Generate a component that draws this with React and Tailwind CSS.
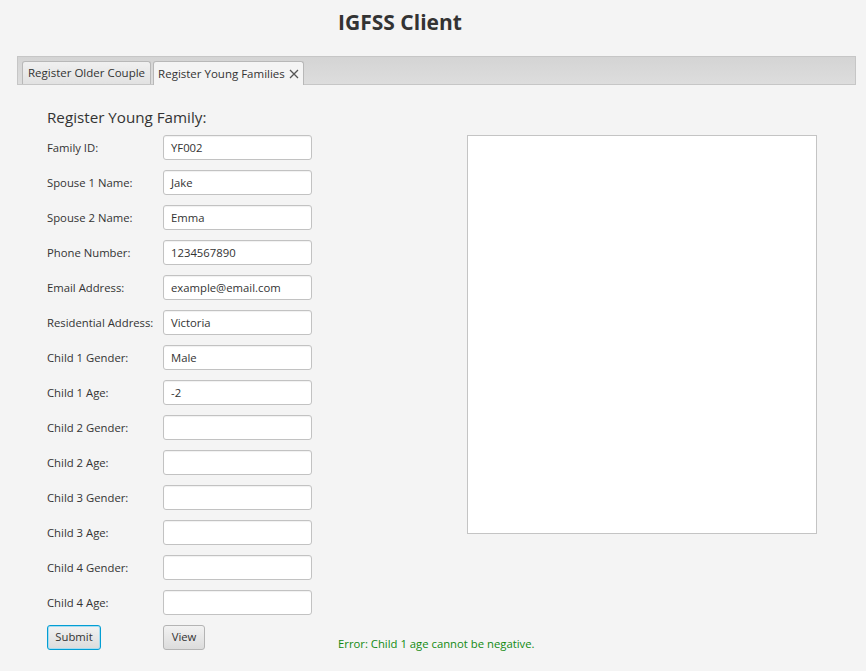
import React from "react";

const rows = [
  ["Family ID:", "YF002"],
  ["Spouse 1 Name:", "Jake"],
  ["Spouse 2 Name:", "Emma"],
  ["Phone Number:", "1234567890"],
  ["Email Address:", "example@email.com"],
  ["Residential Address:", "Victoria"],
  ["Child 1 Gender:", "Male"],
  ["Child 1 Age:", "-2"],
  ["Child 2 Gender:", ""],
  ["Child 2 Age:", ""],
  ["Child 3 Gender:", ""],
  ["Child 3 Age:", ""],
  ["Child 4 Gender:", ""],
  ["Child 4 Age:", ""],
];

const Field = ({ label, value }) => (
  <div className="flex items-center h-[25px]">
    <span className="w-[116px] shrink-0 pt-px text-[11.3px] text-[#333] whitespace-nowrap">{label}</span>
    <div className="w-[149px] h-[25px] shrink-0 bg-white border border-[#c2c2c2] rounded-[3px] shadow-[inset_0_1px_1px_rgba(0,0,0,0.06)] flex items-center px-[7px] pt-px text-[11.3px] text-[#333]">
      {value}
    </div>
  </div>
);

const CloseIcon = () => (
  <svg width="10" height="10" viewBox="0 0 10 10" className="ml-[4px]">
    <path d="M1 1 L9 9 M9 1 L1 9" stroke="#555" strokeWidth="1.3" />
  </svg>
);

export default function App() {
  return (
    <div className="w-[866px] h-[671px] bg-[#f4f4f4] font-['Open_Sans',sans-serif] overflow-hidden">
      <div className="h-[56px] flex justify-center pr-[66px] pt-[7px]">
        <h1 className="text-[21px] font-bold text-[#333] leading-[30px]">IGFSS Client</h1>
      </div>

      <div className="ml-[17px] w-[839px]">
        <div className="h-[29px] bg-gradient-to-b from-[#d4d4d4] to-[#dddddd] border border-[#c6c6c6] flex items-end pl-[4px] gap-[2px]">
          <div className="h-[23px] px-[5px] flex items-center bg-gradient-to-b from-[#f0f0f0] to-[#e2e2e2] border border-b-0 border-[#b8b8b8] rounded-t-[3px] text-[11.5px] text-[#333] whitespace-nowrap">
            Register Older Couple
          </div>
          <div className="h-[24px] -mb-px px-[4px] flex items-center bg-[#f4f4f4] border border-b-0 border-[#b8b8b8] rounded-t-[3px] text-[11.5px] text-[#333] whitespace-nowrap">
            Register Young Families
            <CloseIcon />
          </div>
        </div>

        <div className="pl-[30px] pt-[22px] flex">
          <div className="w-[420px] shrink-0">
            <h2 className="text-[15.2px] leading-[20px] text-[#333] mb-[8px]">Register Young Family:</h2>
            <div className="flex flex-col gap-[10px]">
              {rows.map(([l, v]) => (
                <Field key={l} label={l} value={v} />
              ))}
            </div>
            <div className="flex items-start mt-[10px] h-[25px]">
              <div className="w-[116px] shrink-0 flex">
                <button className="block w-[54px] h-[25px] text-[11.3px] text-[#333] rounded-[3px] border border-[#039ed3] bg-gradient-to-b from-[#f2f2f2] to-[#dcdcdc] shadow-[inset_0_0_0_1px_#a6dcf1]">
                  Submit
                </button>
              </div>
              <button className="block w-[42px] h-[25px] shrink-0 text-[11.3px] text-[#333] rounded-[3px] border border-[#b4b4b4] bg-gradient-to-b from-[#f2f2f2] to-[#dcdcdc]">
                View
              </button>
              <span className="ml-[133px] mt-[11px] text-[11.3px] leading-[16px] text-[#118a11] whitespace-nowrap">
                Error: Child 1 age cannot be negative.
              </span>
            </div>
          </div>
          <div className="w-[350px] h-[399px] mt-[28px] bg-white border border-[#c4c4c4]" />
        </div>
      </div>
    </div>
  );
}
